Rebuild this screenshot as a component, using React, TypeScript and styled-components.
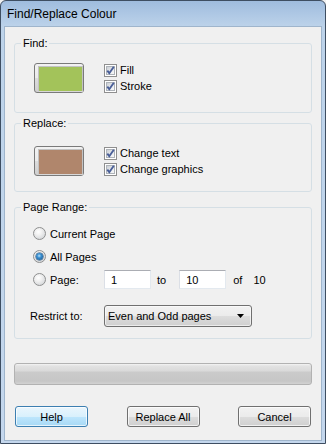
import React from "react";
import styled, { createGlobalStyle } from "styled-components";

const Global = createGlobalStyle`
  html, body { margin: 0; padding: 0; background: #f0f0f0; }
  body {
    font-family: "Liberation Sans", Arial, sans-serif;
    font-size: 11px;
    color: #000;
  }
  * { box-sizing: border-box; }
`;

const Window = styled.div`
  width: 326px;
  height: 444px;
  display: flex;
  flex-direction: column;
  background: linear-gradient(to bottom, #9fbcde 0px, #bdd3ea 26px, #c4d7ed 100%);
  border: 1px solid #3e4e62;
  border-radius: 6px 6px 0 0;
  overflow: hidden;
`;

const TitleBar = styled.div`
  height: 25px;
  flex: none;
  display: flex;
  align-items: center;
  padding: 1px 0 0 6px;
  font-size: 12px;
  color: #000;
`;

const Client = styled.div`
  flex: 1;
  margin: 0 3px 2px;
  background: #f0f0f0;
  border: 1px solid #9fb5cc;
  display: flex;
  flex-direction: column;
  padding: 9px 9px 0;
`;

const Group = styled.fieldset<{ $mt: number }>`
  margin: ${(p) => p.$mt}px 0 0;
  padding: 0;
  border: 1px solid #d5dfe5;
  border-radius: 3px;
  min-width: 0;
`;

const Legend = styled.legend`
  margin-left: 6px;
  padding: 0 2px;
  line-height: 15px;
  font-size: 11px;
`;

const GroupBody = styled.div<{ $pt: number; $pb: number; $pl: number }>`
  padding: ${(p) => p.$pt}px 0 ${(p) => p.$pb}px ${(p) => p.$pl}px;
  display: flex;
  flex-direction: column;
`;

const SwatchRow = styled.div`
  display: flex;
  align-items: flex-start;
  gap: 20px;
`;

const Swatch = styled.div<{ $color: string }>`
  width: 50px;
  height: 30px;
  border: 1px solid #7a7a7a;
  border-radius: 3px;
  padding: 2px 2px 2px 3px;
  background: linear-gradient(#f2f2f2 0%, #ebebeb 50%, #dddddd 50%, #cfcfcf 100%);
  &::after {
    content: "";
    display: block;
    width: 100%;
    height: 100%;
    border: 1px solid #c3c3c3;
    border-bottom-color: #d8d8d8;
    background: ${(p) => p.$color};
  }
`;

const CheckList = styled.div`
  display: flex;
  flex-direction: column;
  gap: 3px;
  padding-top: 1px;
`;

const CheckRow = styled.label`
  display: flex;
  align-items: center;
  gap: 3px;
  height: 13px;
  line-height: 13px;
`;

const CheckBox = styled.span`
  width: 13px;
  height: 13px;
  flex: none;
  border: 1px solid #8f8f8f;
  background: #fff;
  padding: 1px;
  display: flex;
  position: relative;
  &::before {
    content: "";
    flex: 1;
    border: 1px solid #aeb3b9;
    background: linear-gradient(135deg, #cbcfd5 0%, #eef0f2 70%, #f7f7f7 100%);
  }
  svg {
    position: absolute;
    left: 0;
    top: 0;
  }
`;

const Check = () => (
  <CheckBox>
    <svg width="11" height="11" viewBox="0 0 11 11">
      <path d="M2.3 5.6 L4.3 8.2 L8.8 1.8" fill="none" stroke="#4a5f98" strokeWidth="1.9" strokeLinejoin="miter" />
    </svg>
  </CheckBox>
);

const RadioRow = styled.div`
  display: flex;
  align-items: center;
  height: 23px;
  margin-left: 3px;
`;

const RadioLabel = styled.label<{ $w?: number }>`
  display: flex;
  align-items: center;
  gap: 4px;
  ${(p) => (p.$w ? `width: ${p.$w}px; flex: none;` : "")}
`;

const RadioCircle = styled.span<{ $on?: boolean }>`
  width: 13px;
  height: 13px;
  flex: none;
  border-radius: 50%;
  border: 1px solid #8e8f8f;
  background: radial-gradient(circle at 40% 35%, #ffffff 0%, #f0f0f0 35%, #c9ccd0 100%);
  display: flex;
  align-items: center;
  justify-content: center;
  &::after {
    content: "";
    display: ${(p) => (p.$on ? "block" : "none")};
    width: 7px;
    height: 7px;
    border-radius: 50%;
    background: radial-gradient(circle at 45% 40%, #b9e2fa 0%, #3a8fd0 35%, #0f4c85 100%);
    box-shadow: 0 0 0 0.5px #1b456e;
  }
`;

const TextBox = styled.div`
  width: 47px;
  height: 19px;
  flex: none;
  background: #fff;
  border: 1px solid #dbdfe6;
  border-top-color: #abadb3;
  border-bottom-color: #e3e9ef;
  border-right-color: #e3e9ef;
  padding-left: 6px;
  display: flex;
  align-items: center;
`;

const Word = styled.span<{ $ml: number }>`
  margin-left: ${(p) => p.$ml}px;
`;

const RestrictRow = styled.div`
  display: flex;
  align-items: center;
  margin-top: 14px;
`;

const FieldLabel = styled.span`
  width: 74px;
  flex: none;
`;

const Select = styled.div`
  width: 148px;
  height: 22px;
  border: 1px solid #707070;
  border-radius: 3px;
  background: linear-gradient(#f2f2f2 0%, #ebebeb 50%, #dddddd 50%, #cfcfcf 100%);
  box-shadow: inset 0 0 0 1px rgba(255, 255, 255, 0.6);
  display: flex;
  align-items: center;
  justify-content: space-between;
  padding: 0 7px 0 3px;
`;

const Progress = styled.div`
  margin-top: 24px;
  height: 22px;
  border: 1px solid #b2b2b2;
  border-radius: 3px;
  background: linear-gradient(#f4f4f4 0px, #e2e2e2 2px, #dadada 7px, #cbcbcb 8px, #c6c6c6 17px, #d2d2d2 100%);
`;

const ButtonRow = styled.div`
  margin-top: 21px;
  padding: 0 1px;
  display: flex;
  justify-content: space-between;
`;

const Button = styled.button<{ $default?: boolean }>`
  width: 73px;
  height: 21px;
  padding: 0;
  font: inherit;
  color: #000;
  border: 1px solid ${(p) => (p.$default ? "#3c7fb1" : "#707070")};
  border-radius: 3px;
  background: ${(p) =>
    p.$default
      ? "linear-gradient(#eaf6fd 0%, #d9f0fc 50%, #bee6fd 50%, #a7d9f5 100%)"
      : "linear-gradient(#f2f2f2 0%, #ebebeb 50%, #dddddd 50%, #cfcfcf 100%)"};
  box-shadow: inset 0 0 0 1px rgba(255, 255, 255, 0.7);
`;

export default function App() {
  return (
    <>
      <Global />
      <Window>
        <TitleBar>Find/Replace Colour</TitleBar>
        <Client>
          <Group $mt={0}>
            <Legend>Find:</Legend>
            <GroupBody $pt={12} $pb={19} $pl={19}>
              <SwatchRow>
                <Swatch $color="#a3c35a" />
                <CheckList>
                  <CheckRow>
                    <Check />
                    Fill
                  </CheckRow>
                  <CheckRow>
                    <Check />
                    Stroke
                  </CheckRow>
                </CheckList>
              </SwatchRow>
            </GroupBody>
          </Group>
          <Group $mt={3}>
            <Legend>Replace:</Legend>
            <GroupBody $pt={15} $pb={15} $pl={19}>
              <SwatchRow>
                <Swatch $color="#b0866c" />
                <CheckList>
                  <CheckRow>
                    <Check />
                    Change text
                  </CheckRow>
                  <CheckRow>
                    <Check />
                    Change graphics
                  </CheckRow>
                </CheckList>
              </SwatchRow>
            </GroupBody>
          </Group>
          <Group $mt={8}>
            <Legend>Page Range:</Legend>
            <GroupBody $pt={7} $pb={11} $pl={15}>
              <RadioRow>
                <RadioLabel>
                  <RadioCircle />
                  Current Page
                </RadioLabel>
              </RadioRow>
              <RadioRow>
                <RadioLabel>
                  <RadioCircle $on />
                  All Pages
                </RadioLabel>
              </RadioRow>
              <RadioRow>
                <RadioLabel $w={71}>
                  <RadioCircle />
                  Page:
                </RadioLabel>
                <TextBox>1</TextBox>
                <Word $ml={6}>to</Word>
                <Word $ml={13}>
                  <TextBox>10</TextBox>
                </Word>
                <Word $ml={7}>of</Word>
                <Word $ml={11}>10</Word>
              </RadioRow>
              <RestrictRow>
                <FieldLabel>Restrict to:</FieldLabel>
                <Select>
                  <span>Even and Odd pages</span>
                  <svg width="7" height="4" viewBox="0 0 7 4">
                    <path d="M0 0 H7 L3.5 4 Z" fill="#000" />
                  </svg>
                </Select>
              </RestrictRow>
            </GroupBody>
          </Group>
          <Progress />
          <ButtonRow>
            <Button $default>Help</Button>
            <Button>Replace All</Button>
            <Button>Cancel</Button>
          </ButtonRow>
        </Client>
      </Window>
    </>
  );
}
